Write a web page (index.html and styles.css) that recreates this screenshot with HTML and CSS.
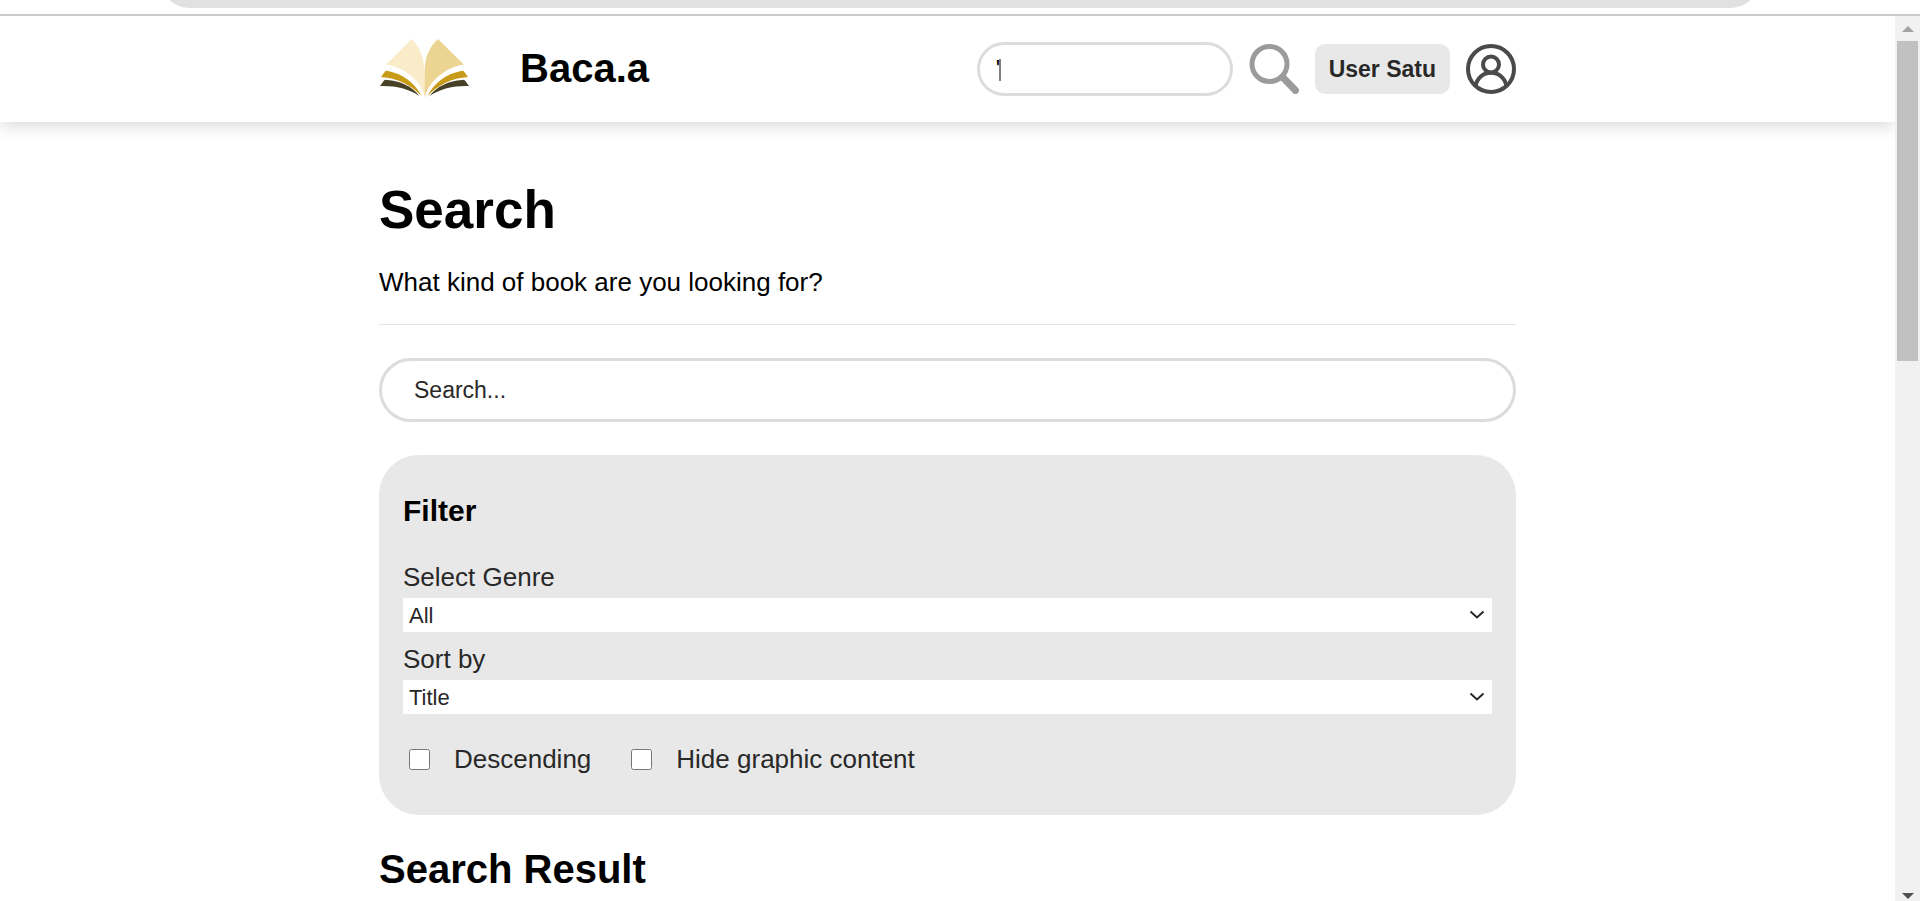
FILE: index.html
```html
<!DOCTYPE html>
<html lang="en">
<head>
<meta charset="utf-8">
<title>Baca.a - Search</title>
<link rel="stylesheet" href="styles.css">
</head>
<body>
<div class="browser-bar"><div class="address-pill"></div></div>
<div class="viewport">
  <div class="page">
    <header class="header">
      <a class="logo" href="#" aria-label="Baca.a home">
        <svg width="91" height="60" viewBox="-1 0 91 60">
          <path fill="#faecc9" d="M6 25.500 C14 18 24 8 31.500 0 C40 8 44 19 44.500 31 L45.500 59 C42 44 27 29 6 25.500Z"/>
          <path fill="#ecd592" d="M84 25.500 C76 18 66 8 58 0 C49 8 45 19 44.700 31 L44.700 59 C48 44 63 29 84 25.500Z"/>
          <path fill="#c79a18" d="M1 38 L5 32.500 Q6 31.500 8 32 C23 35 35 44 41.500 57 C31 46 17 39 1 38Z"/>
          <path fill="#c79a18" d="M88 38 L84 32.500 Q83 31.500 81 32 C66 35 54 44 47.500 57 C58 46 72 39 88 38Z"/>
          <path fill="#474127" d="M0 47 L4 41.500 Q5 40.500 7 41 C20 42 32 47 39.500 57 C28 49 14 46.500 0 47Z"/>
          <path fill="#474127" d="M89 47 L85 41.500 Q84 40.500 82 41 C69 42 57 47 49.500 57 C61 49 75 46.500 89 47Z"/>
        </svg>
      </a>
      <span class="brand">Baca.a</span>
      <form class="header-tools">
        <div class="quick-search">
          <input class="quick-input" type="text" value="'" aria-label="Quick search">
          <span class="caret"></span>
        </div>
        <button class="icon-button" type="button" aria-label="Search">
          <svg width="50" height="50" viewBox="0 0 50 50" fill="none" stroke="#9b9b9b">
            <circle cx="20.500" cy="20" r="17.500" stroke-width="5"/>
            <path d="M33.500 33 L46.500 46.500" stroke-width="7" stroke-linecap="round"/>
          </svg>
        </button>
        <button class="user-button" type="button">User Satu</button>
        <button class="icon-button" type="button" aria-label="Profile">
          <svg width="50" height="50" viewBox="0 0 50 50" fill="none" stroke="#4a4a4a" stroke-width="4">
            <circle cx="25" cy="25" r="23"/>
            <ellipse cx="25" cy="20.500" rx="8" ry="8"/>
            <path d="M9.500 42 C11 34 17 28.800 25 28.800 C33 28.800 39 34 40.500 42"/>
          </svg>
        </button>
      </form>
    </header>
    <main class="main">
      <h1 class="title">Search</h1>
      <p class="lead">What kind of book are you looking for?</p>
      <hr class="rule">
      <input class="search-input" type="text" placeholder="Search..." aria-label="Search books">
      <section class="filter">
        <h3 class="filter-title">Filter</h3>
        <div class="field">
          <label for="genre">Select Genre</label>
          <div class="select-box">
            <select id="genre"><option>All</option></select>
            <svg class="chevron" width="16" height="10" viewBox="0 0 16 10"><path d="M1.500 1.500 L8 7.500 L14.500 1.500"/></svg>
          </div>
        </div>
        <div class="field">
          <label for="sort">Sort by</label>
          <div class="select-box">
            <select id="sort"><option>Title</option></select>
            <svg class="chevron" width="16" height="10" viewBox="0 0 16 10"><path d="M1.500 1.500 L8 7.500 L14.500 1.500"/></svg>
          </div>
        </div>
        <div class="checks">
          <label class="check"><input type="checkbox">Descending</label>
          <label class="check"><input type="checkbox">Hide graphic content</label>
        </div>
      </section>
      <h2 class="result-title">Search Result</h2>
    </main>
  </div>
  <div class="scrollbar">
    <svg width="12" height="6" viewBox="0 0 12 6"><path fill="#a3a3a3" d="M6 0 L12 6 H0Z"/></svg>
    <div class="track"><div class="thumb"></div></div>
    <svg width="12" height="6" viewBox="0 0 12 6"><path fill="#505050" d="M0 0 H12 L6 6Z"/></svg>
  </div>
</div>
</body>
</html>
```
FILE: styles.css
```css
* {
  box-sizing: border-box;
}

body {
  margin: 0;
  height: 100vh;
  display: flex;
  flex-direction: column;
  overflow: hidden;
  background: #fff;
  color: #000;
  font-family: "Liberation Sans", Arial, sans-serif;
}

h1, h2, h3, p, hr {
  margin: 0;
}

input, select, button {
  font-family: inherit;
}

/* Browser bar */
.browser-bar {
  flex: none;
  padding: 0 161px 6px;
  border-bottom: 2px solid #cbcbcb;
}

.address-pill {
  height: 8px;
  overflow: hidden;
  display: flex;
  align-items: flex-end;
}

.address-pill::before {
  content: "";
  flex: 1;
  height: 56px;
  border-radius: 28px;
  background: #e1e1e1;
}

.viewport {
  flex: 1;
  min-height: 0;
  display: flex;
}

.page {
  flex: 1;
  min-width: 0;
  overflow: hidden;
}

/* Header */
.header {
  display: flex;
  align-items: center;
  height: 106px;
  padding: 0 20%;
  background: #fff;
  box-shadow: 0 4px 16px rgba(0, 0, 0, 0.15);
}

.logo svg {
  display: block;
}

.brand {
  margin-left: 50px;
  padding-bottom: 2px;
  font-size: 40px;
  font-weight: bold;
}

.header-tools {
  display: flex;
  align-items: center;
  gap: 16px;
  margin-left: auto;
}

.quick-search {
  position: relative;
}

.quick-input {
  display: block;
  width: 256px;
  height: 54px;
  padding: 0 16px;
  border: 3px solid #dcdcdc;
  border-radius: 27px;
  background: #fff;
  color: #000;
  font-size: 23px;
  outline: none;
}

.caret {
  position: absolute;
  left: 22px;
  top: 17px;
  width: 2px;
  height: 22px;
  background: #808080;
}

.icon-button {
  padding: 0;
  border: 0;
  background: none;
}

.icon-button svg {
  display: block;
}

.user-button {
  height: 50px;
  padding: 0 14px;
  border: 0;
  border-radius: 10px;
  background: #e8e8e8;
  color: #282828;
  font-size: 23px;
  font-weight: bold;
}

/* Content */
.main {
  padding: 56px 20% 0;
}

.title {
  font-size: 53px;
  line-height: 64px;
}

.lead {
  margin-top: 24px;
  font-size: 26px;
  line-height: 32px;
}

.rule {
  height: 1px;
  margin-top: 26px;
  border: 0;
  background: #e5e5e5;
}

.search-input {
  display: block;
  width: 100%;
  height: 64px;
  margin-top: 33px;
  padding: 0 32px;
  border: 3px solid #dcdcdc;
  border-radius: 32px;
  background: #fff;
  font-size: 23px;
}

.search-input::placeholder {
  color: #282828;
}

.filter {
  margin-top: 33px;
  padding: 36px 24px;
  border-radius: 40px;
  background: #e8e8e8;
  color: #282828;
  font-size: 26px;
}

.filter-title {
  margin-bottom: 30px;
  color: #000;
  font-size: 30px;
  line-height: 40px;
}

.field {
  margin-bottom: 11px;
}

.field label {
  display: block;
  padding-bottom: 5px;
  line-height: 32px;
}

.select-box {
  position: relative;
}

.select-box select {
  display: block;
  width: 100%;
  height: 34px;
  padding: 0 6px;
  border: 0;
  border-radius: 0;
  appearance: none;
  background: #fff;
  color: #282828;
  font-size: 22px;
}

.chevron {
  position: absolute;
  right: 7px;
  top: 12px;
  fill: none;
  stroke: #282828;
  stroke-width: 2;
  pointer-events: none;
}

.checks {
  display: flex;
  gap: 40px;
  padding: 14px 0 0 6px;
}

.check {
  display: flex;
  align-items: center;
  gap: 24px;
  line-height: 40px;
}

.check input {
  width: 21px;
  height: 21px;
  margin: 0;
}

.result-title {
  margin-top: 30px;
  font-size: 40px;
  line-height: 48px;
}

/* Scrollbar */
.scrollbar {
  flex: none;
  width: 25px;
  padding: 10px 2px 2px;
  display: flex;
  flex-direction: column;
  align-items: center;
  background: #f1f1f1;
}

.track {
  flex: 1;
  align-self: stretch;
  padding: 9px 0;
}

.thumb {
  height: 38%;
  background: #c1c1c1;
}
```
